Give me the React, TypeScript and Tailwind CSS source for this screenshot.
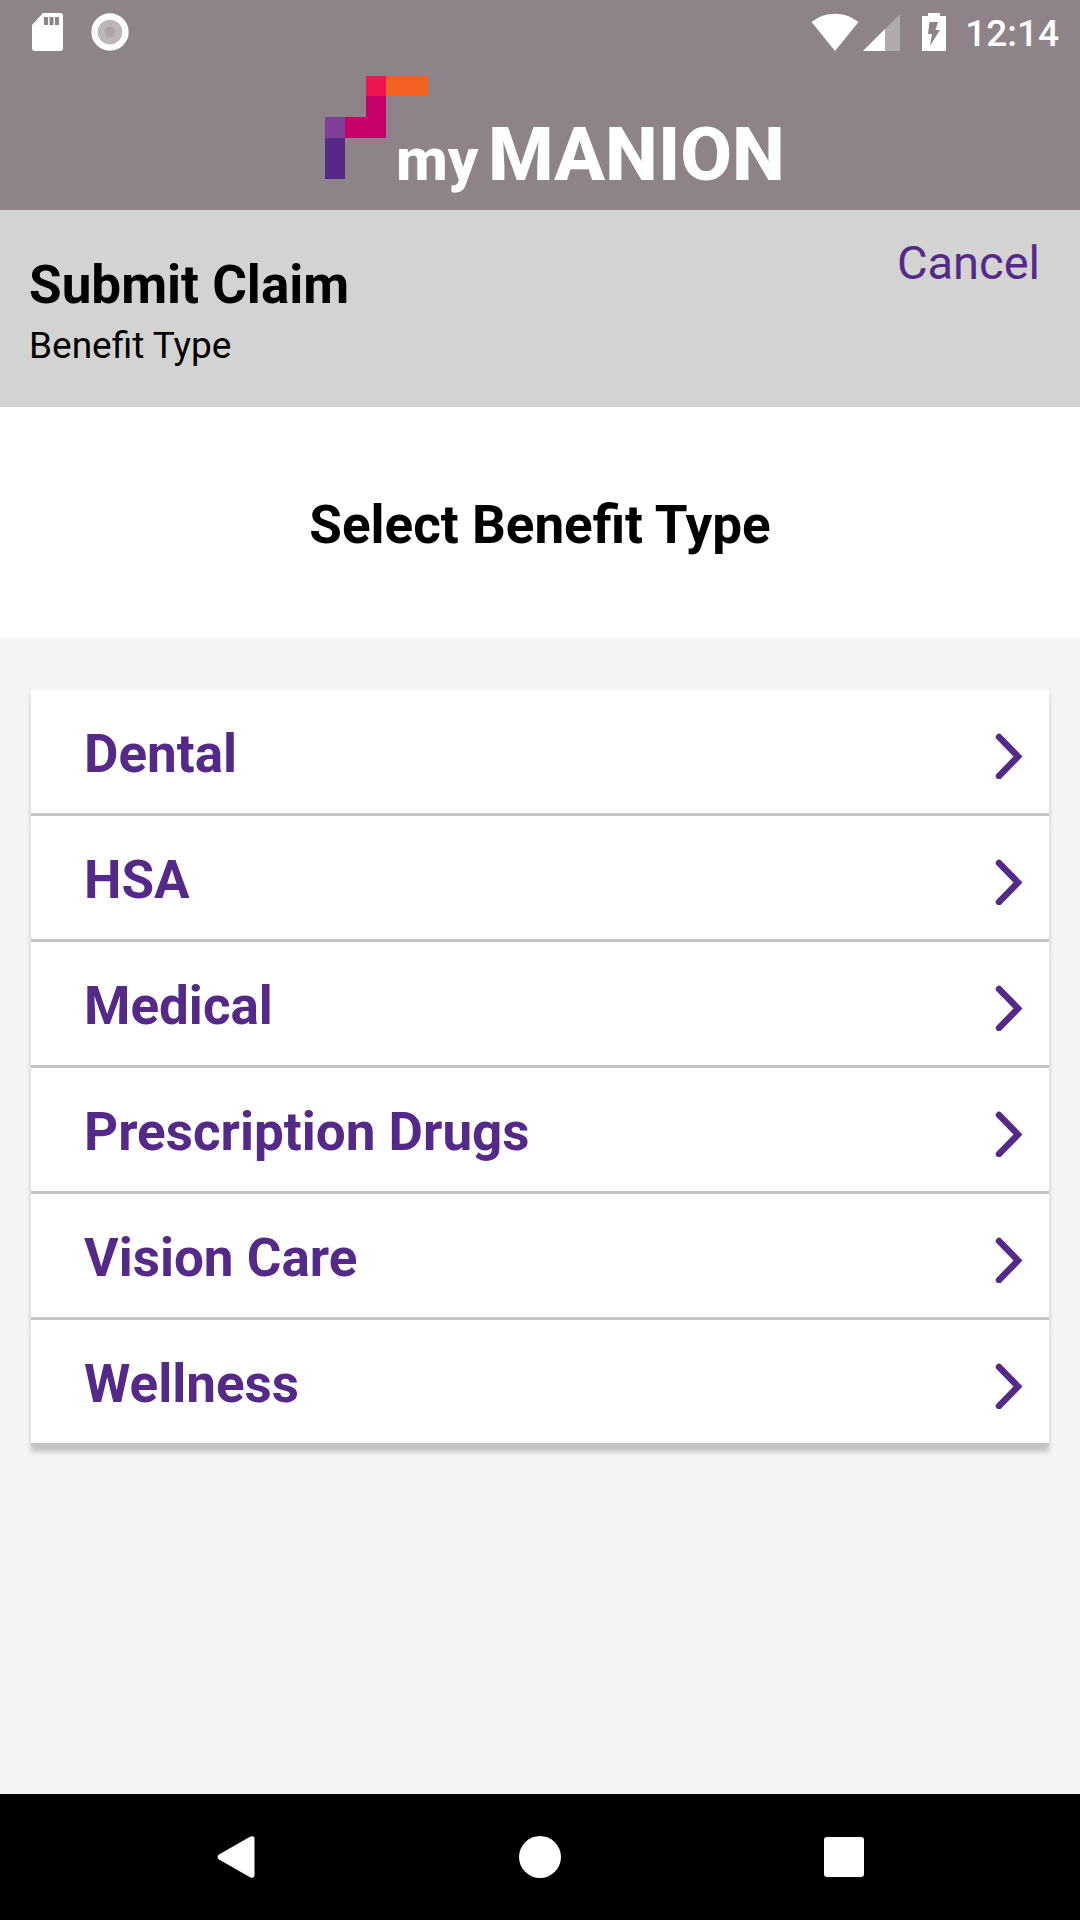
const benefitTypes = [
  'Dental',
  'HSA',
  'Medical',
  'Prescription Drugs',
  'Vision Care',
  'Wellness'
]

function StatusBar() {
  return (
    <div className="flex h-[63px] items-center justify-between pr-[21px] pl-8 text-white">
      <div className="flex items-center gap-7">
        {/* SD card */}
        <svg width="31" height="38" viewBox="0 0 31 38">
          <path
            fill="#fff"
            d="M11 0H28a3 3 0 0 1 3 3V35a3 3 0 0 1-3 3H3a3 3 0 0 1-3-3V12z"
          />
          <path fill="#8d8389" d="M12 4h4v8h-4zM17.500 4h4v8h-4zM23 4h4v8h-4z" />
        </svg>
        <svg width="38" height="38" viewBox="0 0 38 38">
          <circle cx="19" cy="19" r="18.700" fill="#fff" />
          <circle cx="19" cy="19" r="12.300" fill="#bcb6b9" />
          <circle cx="19" cy="19" r="5.500" fill="#aca4a8" />
        </svg>
      </div>

      <div className="flex items-center">
        {/* Wifi */}
        <svg width="48" height="38" viewBox="0 0 48 38">
          <path fill="#fff" d="M24 38L0.500 9Q11 0.700 24 0.700T47.500 9z" />
        </svg>
        {/* Signal */}
        <svg className="ml-1" width="37" height="38" viewBox="0 0 37 38">
          <path fill="#b0a9ad" d="M37 1V38H0z" />
          <path fill="#fff" d="M22 16V38H0z" />
        </svg>
        {/* Battery */}
        <svg className="ml-[21px]" width="26" height="38" viewBox="0 0 26 38">
          <path fill="#fff" d="M7 0h12v3h6v35H1V3h6z" />
          <path fill="#8d8389" d="M8.500 9H17l-2.500 8H19L9 33l2-12H7z" />
        </svg>
        <span className="ml-[18px] pt-1 text-[37px] leading-[43px] font-medium">
          12:14
        </span>
      </div>
    </div>
  )
}

function Logo() {
  return (
    <svg
      className="mx-auto block overflow-visible"
      width="488"
      height="147"
      viewBox="0 0 488 147"
      role="img"
      aria-label="myMANION"
    >
      <path fill="#f26122" d="M90 13h42v20H90z" />
      <path fill="#ed1651" d="M70 13h20v20H70z" />
      <path fill="#c9006b" d="M70 33h20v42H49V54h21z" />
      <path fill="#7f3f98" d="M29 54h20v21H29z" />
      <path fill="#552988" d="M29 75h20v41H29z" />
      <text x="100" y="117" fill="#fff" fontSize="60" fontWeight="800">
        my
      </text>
      <text x="192" y="117" fill="#fff" fontSize="75" fontWeight="800">
        MANION
      </text>
    </svg>
  )
}

function Chevron() {
  return (
    <svg width="28" height="50" viewBox="0 0 28 50" fill="none">
      <path
        d="M5 8L24 27.500L5 47"
        stroke="#552988"
        strokeWidth="6.500"
        strokeLinecap="round"
      />
    </svg>
  )
}

export default function App() {
  return (
    <div className="flex min-h-screen flex-col bg-[#f4f4f4] font-['Roboto',sans-serif] text-black">
      <header className="bg-[#8d8389]">
        <StatusBar />
        <Logo />
      </header>

      <div className="flex items-start justify-between bg-[#d3d3d3] pr-10 pl-[29px]">
        <div className="pt-11 pb-10">
          <h1 className="text-[53px] leading-[62px] font-bold">Submit Claim</h1>
          <p className="mt-2 text-[37px] leading-[43px]">Benefit Type</p>
        </div>
        <button
          type="button"
          className="mt-[25px] text-[47px] leading-[55px] text-[#552988]"
        >
          Cancel
        </button>
      </div>

      <main>
        <h2 className="bg-white pt-[87px] pb-[82px] text-center text-[53px] leading-[62px] font-bold">
          Select Benefit Type
        </h2>

        <ul className="px-[31px] pt-[52px]">
          {benefitTypes.map((type) => (
            <li
              key={type}
              className="border-b-[3px] border-[#c4c4c4] bg-white shadow-[0_6px_5px_#c4c4c4]"
            >
              <button
                type="button"
                className="flex w-full items-center justify-between pt-[33px] pr-[27px] pb-[28px] pl-[53px] text-left text-[53px] leading-[62px] font-bold text-[#552988]"
              >
                {type}
                <Chevron />
              </button>
            </li>
          ))}
        </ul>
      </main>

      {/* Android navigation */}
      <nav className="mt-auto flex h-[126px] items-center justify-between bg-black px-[215px]">
        <button type="button" aria-label="Back">
          <svg width="42" height="42" viewBox="0 0 42 42">
            <path
              fill="#fff"
              d="M4 18.500L35 0.800Q39.500-1 39.500 3V39Q39.500 43 35 41.200L4 23.500Q1 21 4 18.500z"
            />
          </svg>
        </button>
        <button type="button" aria-label="Home">
          <svg width="42" height="42" viewBox="0 0 42 42">
            <circle cx="21" cy="21" r="21" fill="#fff" />
          </svg>
        </button>
        <button type="button" aria-label="Recent apps">
          <svg width="42" height="42" viewBox="0 0 42 42">
            <rect x="1" y="1" width="40" height="40" rx="3" fill="#fff" />
          </svg>
        </button>
      </nav>
    </div>
  )
}
